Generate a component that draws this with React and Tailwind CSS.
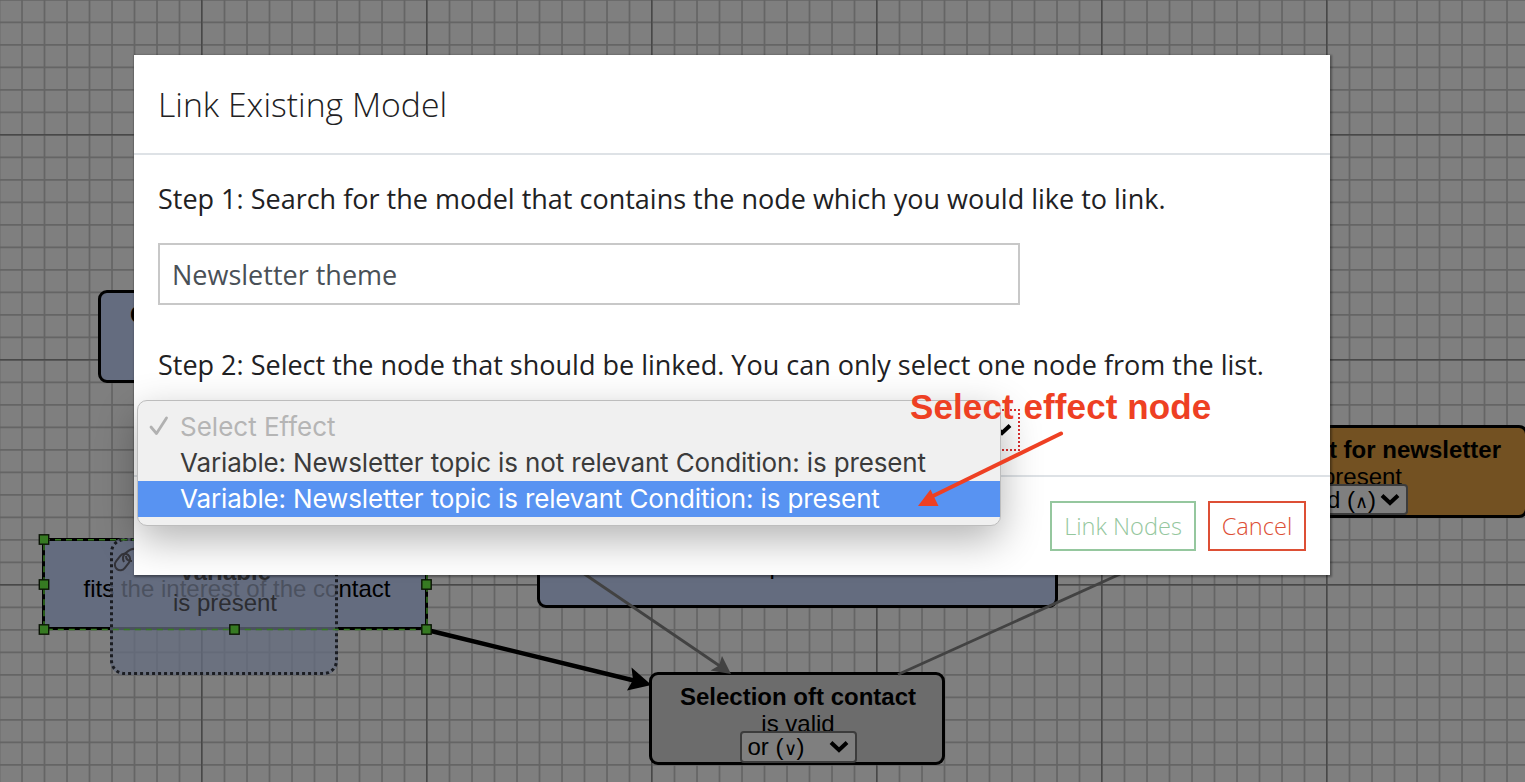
import React from "react";

const ARIAL = "font-['Liberation_Sans',Arial,sans-serif]";

function Grid() {
  const minor = [];
  for (let i = 0; i < 70; i++) minor.push(-0.5 + i * 22.5);
  const rows = [];
  for (let i = 0; i < 36; i++) rows.push(-0.2 + i * 22.5);
  return (
    <svg className="absolute inset-0" width="1525" height="782">
      <g stroke="#656565" strokeWidth="1.7">
        {minor.map((x) => <line key={x} x1={x} x2={x} y1="0" y2="782" />)}
        {rows.map((y) => <line key={y} x1="0" x2="1525" y1={y} y2={y} />)}
      </g>
      <g stroke="#484848" strokeWidth="1.4">
        {[201.7, 426.7, 651.7, 876.7, 1101.7, 1326.7].map((x) => <line key={x} x1={x} x2={x} y1="0" y2="782" />)}
        {[134.7, 359.7, 584.7].map((y) => <line key={y} x1="0" x2="1525" y1={y} y2={y} />)}
      </g>
    </svg>
  );
}

function Chevron({ className }) {
  return (
    <svg className={className} width="20" height="14" viewBox="0 0 20 14">
      <path d="M2 2.500 L10 10 L18 2.500" fill="none" stroke="#000" strokeWidth="4" />
    </svg>
  );
}

function Canvas() {
  return (
    <div className={`absolute inset-0 overflow-hidden bg-[#7f7f7f] text-[24px] text-black ${ARIAL}`}>
      <Grid />
      <div className="absolute left-[98px] top-[290px] h-[93px] w-[320px] rounded-[9px] border-3 border-black bg-[#646c7f]">
        <div className="mt-[8px] ml-[29px] font-bold leading-[27px]">Contact</div>
      </div>
      <div className="absolute left-[537px] top-[515px] flex h-[93px] w-[521px] flex-col items-center rounded-[9px] border-3 border-black bg-[#646c7f]">
        <div className="mt-[34px] leading-[28px]">is present</div>
      </div>
      <div className="absolute left-[1172px] top-[425px] flex h-[93px] w-[356px] flex-col items-center rounded-[9px] border-3 border-black bg-[#735122]">
        <div className="mt-[8px] w-[302px] text-right font-bold leading-[27px]">Consent for newsletter</div>
        <div className="mt-px leading-[26px]">is present</div>
        <div className="-mt-[6px] flex h-[31px] w-[116px] shrink-0 items-center justify-end gap-1 rounded-[4px] border-2 border-[#3c3c3c] bg-[#7f7f7f] pr-[6px]">
          <span>and (<span className="font-['DejaVu_Sans',sans-serif] text-[18px] font-extralight">∧</span>)</span>
          <Chevron />
        </div>
      </div>
      <div className="absolute left-[42px] top-[538px] flex h-[92px] w-[386px] justify-center rounded-[6px] border-3 border-black bg-[#646c7f]">
        <span className="mt-[34px] ml-[4px] whitespace-nowrap leading-[27px]">fits the interest of the contact</span>
      </div>
      <div className="absolute left-[110px] top-[538px] h-[137px] w-[228px] rounded-[14px] bg-[#646c7f]/75">
        <svg className="absolute inset-0" width="228" height="137">
          <rect x="1.5" y="1.5" width="225" height="134" rx="13" fill="none" stroke="#1b1d22" strokeWidth="3" strokeDasharray="3 3" />
          <g fill="none" stroke="#34343a" strokeWidth="2">
            <rect x="3.500" y="18.500" width="18" height="11" rx="5.500" transform="rotate(-52 12.500 24)" />
            <path d="M14 24 C12 20 12.500 18 15 15.500 C19 12 23 9 27 12" />
            <path d="M16 18 C16 21 18 23 22 23" />
          </g>
        </svg>
        <div className="flex flex-col items-center pl-[2px] pt-[19px] text-[#2c2d31]">
          <div className="font-bold leading-[30px]">Variable</div>
          <div className="mt-[2px] leading-[27px]">is present</div>
        </div>
      </div>
      <svg className="absolute inset-0" width="1525" height="782">
        <rect x="44" y="539.7" width="383" height="89.8" fill="none" stroke="#367a22" strokeWidth="1.5" strokeDasharray="6 5" />
        <path d="M427 630 L636 681" stroke="#000" strokeWidth="4.4" />
        <path d="M651.5 685 L627 690.5 L633 680 L631.5 667.5 Z" fill="#000" />
      </svg>
      <div className="absolute left-[649px] top-[672px] flex h-[93px] w-[296px] flex-col items-center rounded-[9px] border-3 border-black bg-[#6c6c6c]">
        <div className="mt-[8px] ml-[2px] font-bold leading-[27px]">Selection oft contact</div>
        <div className="mt-px ml-[2px] leading-[26px]">is valid</div>
        <div className="-mt-[6px] ml-[2px] flex h-[32px] w-[117px] shrink-0 items-center justify-between rounded-[4px] border-2 border-[#3c3c3c] bg-[#7f7f7f] pl-[6px] pr-[6px]">
          <span>or (<span className="font-['DejaVu_Sans',sans-serif] text-[18px] font-extralight">∨</span>)</span>
          <Chevron />
        </div>
      </div>
      <svg className="absolute inset-0" width="1525" height="782">
        <g stroke="#424242" strokeWidth="2.8">
          <path d="M580 571 L722 667.5" />
          <path d="M898 674.5 L1128 570.5" />
        </g>
        <path d="M731 674 L710.5 670.5 L719 665.5 L722 656 Z" fill="#424242" />
        <g fill="#367a22" stroke="#0a1505" strokeWidth="1.4">
          {[[44, 539.5], [44, 584.5], [44, 629.5], [234.5, 629.5], [426.5, 584.5], [426.5, 629.5]].map(([x, y]) => (
            <rect key={`${x}-${y}`} x={x - 4.7} y={y - 4.7} width="9.4" height="9.4" />
          ))}
        </g>
      </svg>
    </div>
  );
}

function Menu() {
  return (
    <div className="absolute left-[3px] top-[345px] h-[126px] w-[864px] rounded-[10px] border border-[#bdbdbd] bg-[#f0f0f0] pt-[8px] font-[Inter,sans-serif] text-[26px] tracking-[-0.14px] text-[#3b3b3b] shadow-[0_14px_40px_rgba(0,0,0,0.3)]">
      <div className="flex h-9 items-center text-[#b5b5b5]">
        <svg className="ml-[11px] mr-[11px] shrink-0" width="20" height="22" viewBox="0 0 20 22">
          <path d="M2 11 L7.5 17.5 L17.5 2" fill="none" stroke="#b1b1b1" strokeWidth="2.8" strokeLinecap="round" strokeLinejoin="round" />
        </svg>
        <span className="-mt-[2px] whitespace-nowrap tracking-normal">Select Effect</span>
      </div>
      <div className="flex h-9 items-center whitespace-nowrap pb-[2px] pl-[42px]">Variable: Newsletter topic is not relevant Condition: is present</div>
      <div className="flex h-9 items-center whitespace-nowrap bg-[#5893f2] pb-[2px] pl-[42px] text-white">Variable: Newsletter topic is relevant Condition: is present</div>
    </div>
  );
}

function Annotation() {
  return (
    <div className={`absolute left-[776px] top-[330px] ${ARIAL}`}>
      <div className="whitespace-nowrap text-[35px] font-bold leading-[44px] tracking-[0.1px] text-[#ee4023]">Select effect node</div>
      <svg className="absolute left-0 top-[44px]" width="170" height="90">
        <path d="M151 4.500 L24 66.500" stroke="#ee4023" strokeWidth="4" strokeLinecap="round" />
        <path d="M8 77 L20.500 60.500 L28.500 77 Z" fill="#ee4023" />
      </svg>
    </div>
  );
}

function Modal() {
  return (
    <div className="relative h-[520px] w-[1196px] bg-white font-['Open_Sans',sans-serif] text-[#212123] shadow-[1px_1px_2px_1px_rgba(0,0,0,0.35)]">
      <header className="flex h-[100px] items-center border-b-2 border-[#dee2e6] px-6">
        <h1 className="whitespace-nowrap text-[33.75px] font-light">Link Existing Model</h1>
      </header>
      <main className="flex h-[322px] flex-col items-start border-b-2 border-[#dee2e6] px-6 pt-[24px] text-[27px] leading-10">
        <p className="whitespace-nowrap">Step 1: Search for the model that contains the node which you would like to link.</p>
        <div className="mt-[24px] flex h-[62px] w-[862px] items-center border-2 border-[#c8c8c8] px-[12px] pt-[2px] text-[#495057]">Newsletter theme</div>
        <p className="mt-[40px] whitespace-nowrap">Step 2: Select the node that should be linked. You can only select one node from the list.</p>
        <div className="mt-[24px] flex h-[42px] w-[862px] shrink-0 items-center justify-end border-2 border-dotted border-[#dc3030] pr-[6px]">
          <Chevron />
        </div>
      </main>
      <footer className="flex justify-end gap-3 px-6 pt-6 text-[23.600px] font-light">
        <button className="h-[50px] w-[146px] whitespace-nowrap border-2 border-[#95c79e] pt-[2px] text-[#95c79e]">Link Nodes</button>
        <button className="h-[50px] w-[98px] border-2 border-[#dd4f35] pt-[2px] text-[#dd4f35]">Cancel</button>
      </footer>
      <Menu />
      <Annotation />
    </div>
  );
}

export default function App() {
  return (
    <div className="relative h-[782px] w-[1525px] overflow-hidden">
      <Canvas />
      <div className="flex pl-[134px] pt-[55px]">
        <Modal />
      </div>
    </div>
  );
}
